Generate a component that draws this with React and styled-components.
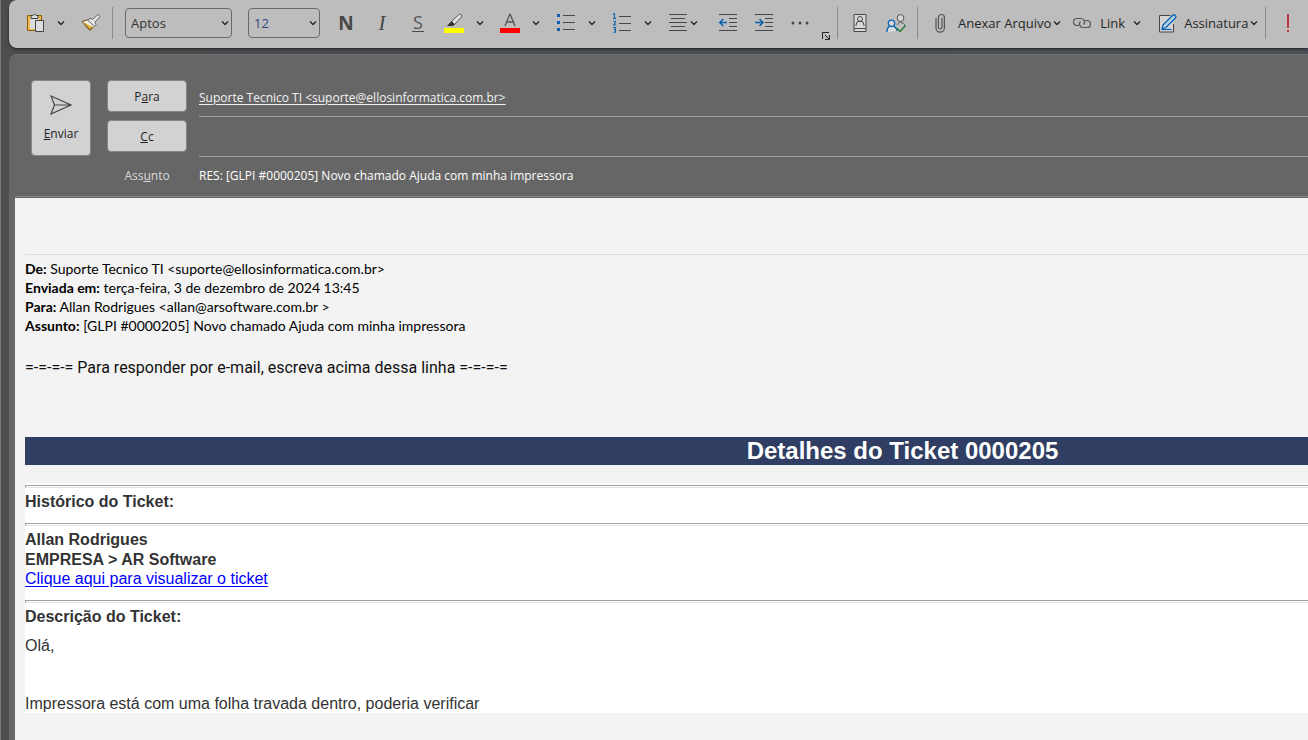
import React, { useState } from "react";
import styled, { createGlobalStyle } from "styled-components";

const GlobalStyle = createGlobalStyle`
  * {
    box-sizing: border-box;
  }
  body {
    margin: 0;
    background-color: #4d4f51;
    overflow: hidden;
  }
`;

const Window = styled.div`
  display: flex;
  flex-direction: column;
  min-height: 100vh;
  padding-left: 8px;
  overflow: hidden;
  border-left: 1px solid #77797a;
  background: linear-gradient(90deg, #4b4d4e, #4b4f58);
  font-family: "Open Sans", "Noto Sans", sans-serif;
  font-size: 12px;
  color: #262626;
`;

const Toolbar = styled.div`
  display: flex;
  align-items: center;
  height: 48px;
  padding: 0 0 2px 13px;
  margin-bottom: 6px;
  background-color: #bdbdbd;
  border-radius: 8px 0 0 8px;
  box-shadow: 0 1px 3px rgba(0, 0, 0, 0.6);
  white-space: nowrap;
`;

const ToolButton = styled.button`
  display: flex;
  flex: none;
  align-items: center;
  justify-content: ${(p) => p.$justify || "center"};
  gap: ${(p) => p.$gap || 0}px;
  width: ${(p) => (p.$width ? p.$width + "px" : "auto")};
  height: 30px;
  padding: ${(p) => p.$padding || "0"};
  margin: 0;
  border: none;
  border-radius: 4px;
  background: none;
  font: inherit;
  font-size: 13px;
  color: #262626;
  cursor: pointer;
  &:hover {
    background-color: #cfcfcf;
  }
  svg {
    flex: none;
  }
`;

const ToolLabel = styled.span`
  margin: 0 ${(p) => p.$after}px 0 ${(p) => p.$before}px;
`;

const BoldButton = styled(ToolButton)`
  font-family: "Noto Sans", sans-serif;
  font-size: 19px;
  font-weight: bold;
  line-height: 24px;
  color: #484848;
`;

const ItalicButton = styled(ToolButton)`
  font-family: "Liberation Serif", serif;
  font-size: 21px;
  font-style: italic;
  line-height: 24px;
  color: #484848;
`;

const UnderlineButton = styled(ToolButton)`
  font-size: 18px;
  color: #555;
  span {
    height: 18px;
    padding: 0 1px;
    line-height: 16px;
    border-bottom: 1px solid #484848;
  }
`;

const SplitButton = styled.div`
  display: flex;
  flex: none;
  margin-right: 4px;
`;

const Launcher = styled(ToolButton)`
  align-self: flex-end;
  height: 20px;
`;

const Divider = styled.span`
  flex: none;
  width: 1px;
  height: 32px;
  margin: 0 4px 0 3px;
  background-color: #8c8c8c;
`;

const SelectBox = styled.label`
  display: grid;
  flex: none;
  align-items: center;
  width: ${(p) => p.$width}px;
  margin: 0 8px;
  svg {
    grid-area: 1 / 1;
    justify-self: end;
    margin-right: 3px;
    pointer-events: none;
  }
`;

const StyledSelect = styled.select`
  grid-area: 1 / 1;
  width: 100%;
  height: 30px;
  padding: 0 5px;
  appearance: none;
  border: 1px solid #6a6a6a;
  border-radius: 4px;
  background: none;
  font: inherit;
  font-size: 13px;
  color: ${(p) => p.$color || "#333"};
`;

const Header = styled.header`
  display: grid;
  grid-template-columns: 60px 80px 1fr;
  grid-template-rows: 37px 40px 39px;
  column-gap: 16px;
  padding: 25px 0 0 22px;
  background-color: #666;
  border-top: 1px solid #6e6e6e;
  border-top-left-radius: 8px;
`;

const HeaderButton = styled.button`
  height: 32px;
  padding: 0;
  border: 1px solid #858585;
  border-radius: 4px;
  background-color: #d2d2d2;
  font: inherit;
  color: #1f1f1f;
  cursor: pointer;
`;

const SendButton = styled(HeaderButton)`
  display: flex;
  flex-direction: column;
  grid-row: 1 / span 2;
  align-items: center;
  justify-content: center;
  gap: 10px;
  height: 76px;
`;

const CcButton = styled(HeaderButton)`
  margin-top: 3px;
`;

const Field = styled.div`
  display: flex;
  align-items: center;
  margin-left: -4px;
  border-bottom: 1px solid #a0a0a0;
`;

const SubjectField = styled(Field)`
  padding-bottom: 2px;
  border-bottom: none;
`;

const Recipient = styled.a`
  line-height: 16px;
  color: #f2f2f2;
  text-decoration: underline;
  text-underline-offset: 2px;
`;

const FieldInput = styled.input`
  width: 100%;
  height: 30px;
  padding: 0;
  border: none;
  outline: none;
  background: none;
  font: inherit;
  color: #fff;
`;

const SubjectLabel = styled.label`
  grid-column: 2;
  align-self: center;
  padding-bottom: 2px;
  text-align: center;
  color: #d9d9d9;
`;

const Body = styled.main`
  flex: 1;
  padding: 2px 0 0 6px;
  background-color: #666;
`;

const Message = styled.article`
  height: 100%;
  padding: 56px 0 27px 10px;
  background-color: #f3f3f3;
  box-shadow: 0 -1px 0 #666, 0 -2px 0 #8a8a8a;
`;

const QuotedHeader = styled.div`
  padding-top: 4px;
  border-top: 1px solid #dedede;
  font-family: Lato, "Noto Sans", sans-serif;
  font-size: 14px;
  font-variant-ligatures: none;
  line-height: 19px;
  color: #000;
  p {
    margin: 0;
  }
`;

const ReplyLine = styled.p`
  margin: 23px 0 59px;
  font-family: Roboto, sans-serif;
  font-size: 16px;
  line-height: 20px;
  color: #111;
`;

// The notification is wider than the pane, so its centre sits right of the middle
const Ticket = styled.section`
  width: calc(100% + 472px);
  font-family: "Liberation Sans", Arial, sans-serif;
  font-size: 16px;
  line-height: 19px;
  color: #333;
`;

const TicketTitle = styled.h1`
  margin: 0 0 18px;
  font-size: 24px;
  line-height: 28px;
  text-align: center;
  color: #fff;
  background-color: #2f3e62;
`;

const TicketBody = styled.div`
  padding-top: 2px;
  background-color: #fff;
`;

const Rule = styled.hr`
  height: 3px;
  margin: 0 0 4px;
  border: 1px solid;
  border-color: #a0a0a0 #e3e3e3 #e3e3e3 #a0a0a0;
`;

const TicketText = styled.p`
  margin: 0 0 ${(p) => p.$after || 0}px;
  font-weight: ${(p) => (p.$bold ? "bold" : "normal")};
`;

const TicketLink = styled.a`
  color: #00f;
  text-underline-offset: 2px;
`;

const Chevron = () => (
  <svg width="8" height="8" viewBox="0 0 8 8" fill="none" stroke="#262626" strokeWidth="1.4">
    <path d="M1 2.5 4 5.500 7 2.500" />
  </svg>
);

const PasteIcon = () => (
  <svg width="18" height="20" viewBox="0 0 18 20" fill="none">
    <path d="M1 3h13v15H1z" fill="#efb84a" />
    <path d="M3 5h9v11H3z" fill="#dcdcdc" />
    <path d="M4 2.500H.5v15H8M11 2.500h3.500V7" stroke="#8f5f0c" />
    <path d="M4 5.500v-3h2a1.600 1.600 0 0 1 3 0h2v3z" fill="#dcdcdc" stroke="#444" />
    <path d="M8.500 7.500h8v11h-8z" fill="#dcdcdc" stroke="#444" />
  </svg>
);

const BrushIcon = () => (
  <svg width="20" height="18" viewBox="0 0 20 18" fill="none">
    <path d="M1.500 8 9.500 15.800l3.500-3.800-5-5.500z" fill="#e9b93f" />
    <path d="M3.500 10.500 9 16l4-4" stroke="#8a6414" strokeWidth="1.400" />
    <path d="M1 7.500 8 5.500l6.500 6.500L12 13z" fill="#f2efe6" />
    <path d="M1 7.500 4 10.500M1 7.500l6.500-2" stroke="#6b5320" />
    <path d="m7 6.500 2-2.500 2.500 1.500 5-4.500a1.500 1.500 0 0 1 2 2.200L14 8l1 2.500-1.500 2z" fill="#e4e4e4" stroke="#555" strokeWidth=".9" />
  </svg>
);

const HighlightIcon = () => (
  <svg width="20" height="20" viewBox="0 0 20 20" fill="none">
    <path d="M0 15h20v5H0z" fill="#ff0" />
    <path d="M7.500 8.500 14.500 1.800a1.800 1.800 0 0 1 2.800 2.400L10.500 11.500z" fill="#dedede" stroke="#555" />
    <path d="M7.500 8 11 11.500 8.500 13H3z" fill="#333" />
  </svg>
);

const FontColorIcon = () => (
  <svg width="20" height="20" viewBox="0 0 20 20" fill="none">
    <path d="M0 15h20v5H0z" fill="#f00" />
    <path d="M5 13 9.700 1.500h.6L15 13M6.700 9h6.600" stroke="#555" strokeWidth="1.300" />
  </svg>
);

const BulletsIcon = () => (
  <svg width="18" height="18" viewBox="0 0 18 18">
    <path d="M0 0h3v3H0zM0 7h3v3H0zM0 14h3v3H0z" fill="#0a5fae" />
    <path d="M6 1.500h12M6 8.500h12M6 15.500h12" stroke="#484848" />
  </svg>
);

const NumbersIcon = () => (
  <svg width="18" height="20" viewBox="0 0 18 20">
    <path d="M0 1.500 1.500.6V5M0 5.400h3" fill="none" stroke="#1468ac" strokeWidth="1.100" />
    <path d="M.2 8h1.600q1 0 .8 1.200L.5 12h2.700" fill="none" stroke="#1468ac" strokeWidth="1.100" />
    <path d="M.2 14.600h2.300v4.600H.2M.8 16.900h1.700" fill="none" stroke="#1468ac" strokeWidth="1.100" />
    <path d="M6 3.500h12M6 10.500h12M6 17.500h12" stroke="#484848" />
  </svg>
);

const AlignIcon = () => (
  <svg width="18" height="18" viewBox="0 0 18 18" stroke="#484848">
    <path d="M0 .5h18M2 4.500h14M0 8.500h18M2 12.500h14M0 16.500h18" />
  </svg>
);

const IndentIcon = ({ increase }) => (
  <svg width="18" height="18" viewBox="0 0 18 18" fill="none">
    <path d="M0 .5h18M10 4.500h8M10 8.500h8M10 12.500h8M0 16.500h18" stroke="#484848" />
    <path
      d={increase ? "M0 8.500h8M4.500 5 8 8.500 4.500 12" : "M8 8.500H.7M4.200 5 .7 8.500l3.500 3.500"}
      stroke="#0a5fae"
      strokeWidth="1.500"
    />
  </svg>
);

const MoreIcon = () => (
  <svg width="18" height="4" viewBox="0 0 18 4" fill="#484848">
    <circle cx="2" cy="2" r="1.500" />
    <circle cx="9" cy="2" r="1.500" />
    <circle cx="16" cy="2" r="1.500" />
  </svg>
);

const LauncherIcon = () => (
  <svg width="8" height="8" viewBox="0 0 8 8" fill="none" stroke="#262626">
    <path d="M.5 7V.5H7M3 3l4 4M7.500 3v4.500H3" />
  </svg>
);

const ContactIcon = () => (
  <svg width="14" height="18" viewBox="0 0 14 18" stroke="#484848" fill="none">
    <path d="M1 .5h12v17H1z" fill="#d8d8d8" />
    <path d="M1 14.500h12M3 12V11a4 4 0 0 1 8 0v1" />
    <circle cx="7" cy="5" r="2.500" />
  </svg>
);

const CheckNamesIcon = () => (
  <svg width="20" height="19" viewBox="0 0 20 19" fill="none">
    <circle cx="14.500" cy="4" r="3.400" fill="#d8d8d8" stroke="#555" />
    <path d="M11 11c1-2 2-2.500 3.500-2.500 2 0 4 1 4.500 3.500" stroke="#555" />
    <path d="M1 18c0-4 2-6 4.500-6s5 1.500 5.500 5" fill="#d8d8d8" stroke="#0a64b4" strokeWidth="1.300" />
    <circle cx="5.500" cy="9.300" r="3.200" fill="#d8d8d8" stroke="#0a64b4" strokeWidth="1.300" />
    <path d="m10.500 14 3.500 3.500 5.500-6" stroke="#2c7a33" strokeWidth="1.500" />
  </svg>
);

const ClipIcon = () => (
  <svg width="12" height="20" viewBox="0 0 12 20" fill="none" stroke="#555" strokeWidth="1.200">
    <path d="M8 5v9a1.800 1.800 0 0 1-3.600 0V4.500a3 3 0 0 1 6 0V15a4.200 4.200 0 0 1-8.400 0V5" />
  </svg>
);

const LinkIcon = () => (
  <svg width="18" height="12" viewBox="0 0 18 12" fill="none" stroke="#555" strokeWidth="1.200">
    <path d="M6 8.500H4a3.500 3.500 0 0 1 0-7h4a3.500 3.500 0 0 1 2.500 6" />
    <path d="M12 3.500h2a3.500 3.500 0 0 1 0 7h-4a3.500 3.500 0 0 1-2.500-6" />
  </svg>
);

const SignatureIcon = () => (
  <svg width="18" height="19" viewBox="0 0 18 19" fill="none">
    <path d="M14.500 10v8H.5V1.500h11" fill="#d4d4d4" stroke="#444" />
    <path d="m4 11 9.500-9.500a1.700 1.700 0 0 1 2.800 2.500L7 13.500 3 15z" fill="#b8d0e4" stroke="#0a64b4" strokeWidth="1.300" />
    <path d="M3 15.500h9.500" stroke="#0a64b4" strokeWidth="1.200" />
  </svg>
);

const ImportanceIcon = () => (
  <svg width="4" height="18" viewBox="0 0 4 18" fill="#b8383d">
    <path d="M1 0h2v14H1zM1 16h2v2H1z" />
  </svg>
);

const SendIcon = () => (
  <svg width="22" height="20" viewBox="0 0 22 20" fill="none" stroke="#484848" strokeWidth="1.200">
    <path d="M1 1 21 10 1 19 4.500 10zM4.500 10H21" />
  </svg>
);

const splitTools = [
  { label: "Realce", Icon: HighlightIcon },
  { label: "Cor da fonte", Icon: FontColorIcon },
  { label: "Marcadores", Icon: BulletsIcon },
  { label: "Numeração", Icon: NumbersIcon },
];

const quotedHeader = [
  ["De:", "Suporte Tecnico TI <suporte@ellosinformatica.com.br>"],
  ["Enviada em:", "terça-feira, 3 de dezembro de 2024 13:45"],
  ["Para:", "Allan Rodrigues <allan@arsoftware.com.br >"],
  ["Assunto:", "[GLPI #0000205] Novo chamado Ajuda com minha impressora"],
];

const App = () => {
  const [cc, setCc] = useState("");
  const [subject, setSubject] = useState("RES: [GLPI #0000205] Novo chamado Ajuda com minha impressora");

  return (
    <Window>
      <GlobalStyle />
      <Toolbar>
        <ToolButton $width={28} aria-label="Colar"><PasteIcon /></ToolButton>
        <ToolButton $width={22} aria-label="Opções de colagem"><Chevron /></ToolButton>
        <ToolButton $width={37} aria-label="Pincel de formatação"><BrushIcon /></ToolButton>
        <Divider />
        <SelectBox $width={107}>
          <StyledSelect aria-label="Fonte" defaultValue="Aptos">
            <option>Aptos</option>
          </StyledSelect>
          <Chevron />
        </SelectBox>
        <SelectBox $width={72}>
          <StyledSelect aria-label="Tamanho da fonte" defaultValue="12" $color="#2f4a78">
            <option>12</option>
          </StyledSelect>
          <Chevron />
        </SelectBox>
        <BoldButton $width={36} aria-label="Negrito">N</BoldButton>
        <ItalicButton $width={36} aria-label="Itálico">I</ItalicButton>
        <UnderlineButton $width={36} aria-label="Sublinhado"><span>S</span></UnderlineButton>
        {splitTools.map(({ label, Icon }) => (
          <SplitButton key={label}>
            <ToolButton $width={36} aria-label={label}><Icon /></ToolButton>
            <ToolButton $width={16} aria-label={`${label}: opções`}><Chevron /></ToolButton>
          </SplitButton>
        ))}
        <ToolButton $width={50} $justify="flex-start" $gap={3} $padding="0 9px" aria-label="Alinhar">
          <AlignIcon />
          <Chevron />
        </ToolButton>
        <ToolButton $width={36} aria-label="Diminuir recuo"><IndentIcon /></ToolButton>
        <ToolButton $width={36} aria-label="Aumentar recuo"><IndentIcon increase /></ToolButton>
        <ToolButton $width={36} aria-label="Mais comandos"><MoreIcon /></ToolButton>
        <Launcher $width={16} aria-label="Texto básico"><LauncherIcon /></Launcher>
        <Divider />
        <ToolButton $width={36} aria-label="Catálogo de endereços"><ContactIcon /></ToolButton>
        <ToolButton $width={36} aria-label="Verificar nomes"><CheckNamesIcon /></ToolButton>
        <Divider />
        <ToolButton $padding="0 6px 0 12px">
          <ClipIcon />
          <ToolLabel $before={12} $after={2}>Anexar Arquivo</ToolLabel>
          <Chevron />
        </ToolButton>
        <ToolButton $padding="0 8px 0 6px">
          <LinkIcon />
          <ToolLabel $before={9} $after={8}>Link</ToolLabel>
          <Chevron />
        </ToolButton>
        <ToolButton $padding="0 4px 0 10px">
          <SignatureIcon />
          <ToolLabel $before={7} $after={2}>Assinatura</ToolLabel>
          <Chevron />
        </ToolButton>
        <Divider />
        <ToolButton $width={36} aria-label="Alta prioridade"><ImportanceIcon /></ToolButton>
      </Toolbar>

      <Header>
        <SendButton>
          <SendIcon />
          <span><u>E</u>nviar</span>
        </SendButton>
        <HeaderButton>P<u>a</u>ra</HeaderButton>
        <Field>
          <Recipient href="mailto:suporte@ellosinformatica.com.br">
            Suporte Tecnico TI &lt;suporte@ellosinformatica.com.br&gt;
          </Recipient>
        </Field>
        <CcButton><u>C</u>c</CcButton>
        <Field>
          <FieldInput aria-label="Cc" value={cc} onChange={(e) => setCc(e.target.value)} />
        </Field>
        <SubjectLabel htmlFor="subject">Ass<u>u</u>nto</SubjectLabel>
        <SubjectField>
          <FieldInput id="subject" value={subject} onChange={(e) => setSubject(e.target.value)} />
        </SubjectField>
      </Header>

      <Body>
        <Message>
          <QuotedHeader>
            {quotedHeader.map(([label, value]) => (
              <p key={label}><b>{label}</b> {value}</p>
            ))}
          </QuotedHeader>
          <ReplyLine>=-=-=-= Para responder por e-mail, escreva acima dessa linha =-=-=-=</ReplyLine>
          <Ticket>
            <TicketTitle>Detalhes do Ticket 0000205</TicketTitle>
            <TicketBody>
              <Rule />
              <TicketText $bold $after={12}>Histórico do Ticket:</TicketText>
              <Rule />
              <TicketText $bold $after={1}>Allan Rodrigues</TicketText>
              <TicketText $bold>EMPRESA &gt; AR Software</TicketText>
              <TicketText $after={12}><TicketLink href="#ticket">Clique aqui para visualizar o ticket</TicketLink></TicketText>
              <Rule />
              <TicketText $bold $after={10}>Descrição do Ticket:</TicketText>
              <TicketText $after={39}>Olá,</TicketText>
              <TicketText>Impressora está com uma folha travada dentro, poderia verificar</TicketText>
            </TicketBody>
          </Ticket>
        </Message>
      </Body>
    </Window>
  );
};

export default App;
